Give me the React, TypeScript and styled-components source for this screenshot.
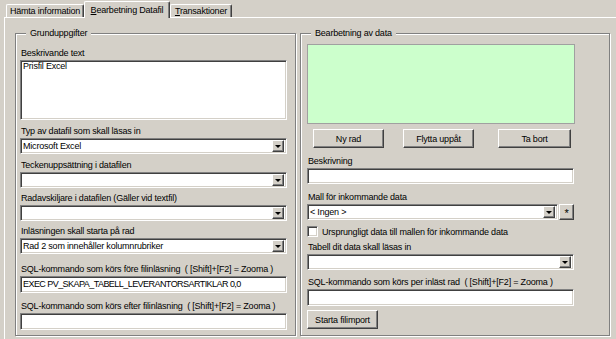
import React from 'react'
import styled, {createGlobalStyle, css} from 'styled-components'

const face = '#d4d0c8'
const shadow = '#808080'
const darkShadow = '#404040'

const GlobalStyle = createGlobalStyle`
    html, body {
        margin: 0;
        padding: 0;
        background: ${face};
    }
    * {
        box-sizing: border-box;
    }
`

const sunken = css`
    background: #fff;
    border: 1px solid;
    border-color: ${shadow} #fff #fff ${shadow};
    box-shadow: inset 1px 1px 0 ${darkShadow}, inset -1px -1px 0 ${face};
`

const raised = css`
    background: ${face};
    border: 1px solid;
    border-color: #fff ${darkShadow} ${darkShadow} #fff;
    box-shadow: inset -1px -1px 0 ${shadow};
`

const Window = styled.div`
    width: 616px;
    height: 339px;
    overflow: hidden;
    background: ${face};
    font-family: "Liberation Sans", Arial, sans-serif;
    font-size: 9px;
    letter-spacing: -0.2px;
    color: #000;
`

const TabStrip = styled.div`
    display: flex;
    align-items: flex-end;
    height: 17px;
    padding-left: 6px;
    position: relative;
    z-index: 1;
`

const Tab = styled.div<{active?: boolean; w: number}>`
    width: ${p => p.w}px;
    height: ${p => p.active ? 17 : 13}px;
    margin-bottom: ${p => p.active ? -1 : 0}px;
    background: ${face};
    border-top: 1px solid #fff;
    border-left: 1px solid #fff;
    border-right: 1px solid ${darkShadow};
    box-shadow: inset -1px 0 0 ${shadow};
    border-radius: 2px 2px 0 0;
    display: flex;
    align-items: ${p => p.active ? 'flex-start' : 'center'};
    padding-top: ${p => p.active ? 3 : 0}px;
    justify-content: center;
    white-space: nowrap;
`

const Key = styled.span`
    text-decoration: underline;
`

const Panel = styled.div`
    margin-left: 4px;
    height: 330px;
    border-top: 1px solid #fff;
    border-left: 1px solid #fff;
    padding: 15px 0 0 10px;
    display: flex;
    gap: 4px;
`

const GroupBox = styled.div<{w: number; pl: number; pt: number}>`
    position: relative;
    width: ${p => p.w}px;
    height: 303px;
    border: 1px solid ${shadow};
    box-shadow: inset 1px 1px 0 #fff, 1px 1px 0 #fff;
    padding: ${p => p.pt}px 0 0 ${p => p.pl}px;
    display: flex;
    flex-direction: column;
`

const Caption = styled.div`
    position: absolute;
    top: -7px;
    left: 10px;
    padding: 0 4px;
    line-height: 13px;
    background: ${face};
`

const Field = styled.div<{mt: number}>`
    margin-top: ${p => p.mt}px;
    display: flex;
    flex-direction: column;
`

const Label = styled.div`
    height: 14px;
    line-height: 14px;
    padding-left: 1px;
    white-space: pre;
`

const TextArea = styled.div`
    ${sunken};
    width: 267px;
    height: 60px;
    padding: 0 2px;
    line-height: 11px;
`

const TextBox = styled.div<{h?: number; tight?: boolean}>`
    ${sunken};
    width: 267px;
    height: ${p => p.h ?? 16}px;
    padding: 0 2px;
    line-height: ${p => (p.h ?? 16) - 2}px;
    letter-spacing: ${p => p.tight ? '-0.55px' : 'inherit'};
    white-space: pre;
`

const ComboRow = styled.div`
    display: flex;
    gap: 1px;
`

const Combo = styled.div<{w?: number}>`
    ${sunken};
    width: ${p => p.w ?? 267}px;
    height: 16px;
    display: flex;
    align-items: center;
    padding: 2px;
`

const ComboValue = styled.div`
    flex: 1;
    line-height: 12px;
    white-space: pre;
`

const DropButton = styled.div`
    ${raised};
    width: 12px;
    height: 12px;
    display: flex;
    align-items: center;
    justify-content: center;
    &::after {
        content: '';
        border-left: 3px solid transparent;
        border-right: 3px solid transparent;
        border-top: 3px solid #000;
        margin-top: 1px;
    }
`

const StarButton = styled.div`
    ${raised};
    width: 15px;
    height: 16px;
    display: flex;
    align-items: center;
    justify-content: center;
    font-size: 11px;
    line-height: 1;
    padding-top: 3px;
`

const ListBox = styled.div`
    width: 268px;
    height: 80px;
    background: #ccffcc;
    border: 1px solid #a0a0a0;
`

const ButtonRow = styled.div`
    margin-top: 5px;
    display: flex;
    padding-left: 6px;
`

const Button = styled.div<{w: number; ml?: number}>`
    ${raised};
    width: ${p => p.w}px;
    height: 19px;
    margin-left: ${p => p.ml ?? 0}px;
    display: flex;
    align-items: center;
    justify-content: center;
    white-space: nowrap;
`

const CheckRow = styled.div`
    margin-top: 5px;
    height: 13px;
    display: flex;
    align-items: center;
    gap: 4px;
`

const CheckBox = styled.div`
    ${sunken};
    width: 11px;
    height: 11px;
`

function Select({value = '', w}: {value?: string; w?: number}) {
    return (
        <Combo w={w}>
            <ComboValue>{value}</ComboValue>
            <DropButton/>
        </Combo>
    )
}

export default function App() {
    return (
        <Window>
            <GlobalStyle/>
            <TabStrip>
                <Tab w={78}>Hämta information</Tab>
                <Tab w={86} active><span><Key>B</Key>earbetning Datafil</span></Tab>
                <Tab w={62}><span><Key>T</Key>ransaktioner</span></Tab>
            </TabStrip>
            <Panel>
                <GroupBox w={281} pl={4} pt={12}>
                    <Caption>Grunduppgifter</Caption>
                    <Field mt={0}>
                        <Label>Beskrivande text</Label>
                        <TextArea>Prisfil Excel</TextArea>
                    </Field>
                    <Field mt={4}>
                        <Label>Typ av datafil som skall läsas in</Label>
                        <Select value="Microsoft Excel"/>
                    </Field>
                    <Field mt={4}>
                        <Label>Teckenuppsättning i datafilen</Label>
                        <Select/>
                    </Field>
                    <Field mt={3}>
                        <Label>Radavskiljare i datafilen (Gäller vid textfil)</Label>
                        <Select/>
                    </Field>
                    <Field mt={3}>
                        <Label>Inläsningen skall starta på rad</Label>
                        <Select value="Rad 2 som innehåller kolumnrubriker"/>
                    </Field>
                    <Field mt={8}>
                        <Label>SQL-kommando som körs före filinläsning  ( [Shift]+[F2] = Zooma )</Label>
                        <TextBox h={17} tight>EXEC PV_SKAPA_TABELL_LEVERANTORSARTIKLAR 0,0</TextBox>
                    </Field>
                    <Field mt={6}>
                        <Label>SQL-kommando som körs efter filinläsning  ( [Shift]+[F2] = Zooma )</Label>
                        <TextBox h={17}/>
                    </Field>
                </GroupBox>
                <GroupBox w={310} pl={6} pt={10}>
                    <Caption>Bearbetning av data</Caption>
                    <ListBox/>
                    <ButtonRow>
                        <Button w={71}>Ny rad</Button>
                        <Button w={71} ml={19}>Flytta uppåt</Button>
                        <Button w={73} ml={24}>Ta bort</Button>
                    </ButtonRow>
                    <Field mt={6}>
                        <Label>Beskrivning</Label>
                        <TextBox/>
                    </Field>
                    <Field mt={6}>
                        <Label>Mall för inkommande data</Label>
                        <ComboRow>
                            <Select value="< Ingen >" w={251}/>
                            <StarButton>*</StarButton>
                        </ComboRow>
                    </Field>
                    <CheckRow>
                        <CheckBox/>
                        <span>Ursprungligt data till mallen för inkommande data</span>
                    </CheckRow>
                    <Field mt={2}>
                        <Label>Tabell dit data skall läsas in</Label>
                        <Select/>
                    </Field>
                    <Field mt={5}>
                        <Label>SQL-kommando som körs per inläst rad  ( [Shift]+[F2] = Zooma )</Label>
                        <TextBox h={17}/>
                    </Field>
                    <Field mt={4}>
                        <Button w={71}>Starta filimport</Button>
                    </Field>
                </GroupBox>
            </Panel>
        </Window>
    )
}
